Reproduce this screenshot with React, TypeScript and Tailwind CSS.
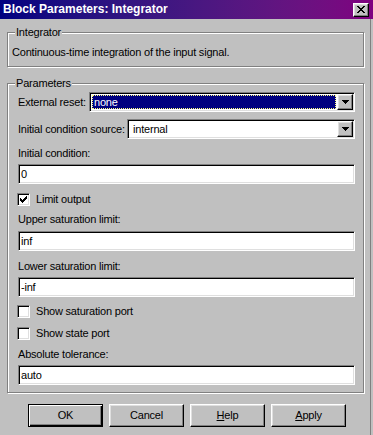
import React from 'react';

const sunken =
  'border border-t-[#808080] border-l-[#808080] border-r-white border-b-white shadow-[inset_1px_1px_0_#000,inset_-1px_-1px_0_#dfdfdf]';
const raised =
  'border border-t-white border-l-white border-r-black border-b-black shadow-[inset_-1px_-1px_0_#808080,inset_1px_1px_0_#dfdfdf]';

function Arrow() {
  return (
    <svg width="7" height="4" viewBox="0 0 7 4" shapeRendering="crispEdges">
      <path d="M0 0h7v1h-7z M1 1h5v1h-5z M2 2h3v1h-3z M3 3h1v1h-1z" fill="#000" />
    </svg>
  );
}

function Combo({ value, selected }: { value: string; selected?: boolean }) {
  return (
    <div className={`flex h-[20px] flex-1 bg-white p-[1px] ${sunken}`}>
      <div className="flex flex-1 items-center">
        {selected ? (
          <div className="m-[1px] flex h-[14px] flex-1 items-center border border-dotted border-[#ffff7f] bg-[#000080] pl-[1px] text-white">
            {value}
          </div>
        ) : (
          <span className="pl-[4px]">{value}</span>
        )}
      </div>
      <div className={`flex w-[16px] items-center justify-center bg-[#c0c0c0] ${raised}`}>
        <Arrow />
      </div>
    </div>
  );
}

function Field({ value, className = '' }: { value: string; className?: string }) {
  return (
    <div className={`flex h-[20px] items-center bg-white pl-[2px] ${sunken} ${className}`}>{value}</div>
  );
}

function Check({ checked, label, className = '' }: { checked?: boolean; label: string; className?: string }) {
  return (
    <div className={`flex h-[13px] items-center gap-[6px] ${className}`}>
      <div className={`flex h-[13px] w-[13px] items-center justify-center bg-white ${sunken}`}>
        {checked && (
          <svg width="7" height="7" viewBox="0 0 7 7" shapeRendering="crispEdges">
            <path
              d="M6 0h1v1h-1z M5 1h2v1h-2z M0 2h1v1h-1z M4 2h3v1h-3z M0 3h2v1h-2z M3 3h3v1h-3z M0 4h5v1h-5z M1 5h3v1h-3z M2 6h1v1h-1z"
              fill="#000"
            />
          </svg>
        )}
      </div>
      <span>{label}</span>
    </div>
  );
}

function Label({ text, className = '' }: { text: string; className?: string }) {
  return <div className={`h-[13px] leading-[13px] ${className}`}>{text}</div>;
}

function Button({ children, isDefault }: { children: React.ReactNode; isDefault?: boolean }) {
  return (
    <button
      className={
        isDefault
          ? 'flex h-[23px] w-[75px] items-center justify-center border border-black bg-[#c0c0c0] shadow-[inset_1px_1px_0_#fff,inset_-1px_-1px_0_#000,inset_-2px_-2px_0_#808080]'
          : `flex h-[23px] w-[75px] items-center justify-center bg-[#c0c0c0] ${raised}`
      }
    >
      {children}
    </button>
  );
}

export default function App() {
  return (
    <div className="flex h-[435px] w-[373px] flex-col overflow-hidden bg-[#c0c0c0] font-['Liberation_Sans',Arial,sans-serif] text-[11px] leading-[13px] tracking-[-0.2px] text-black">
      {/* Title bar */}
      <div className="flex h-[19px] shrink-0 items-center justify-between bg-gradient-to-r from-[#000080] to-[#800080] pl-[3px] pr-[4px]">
        <span className="text-[12px] font-bold tracking-normal text-white">Block Parameters: Integrator</span>
        <button className={`flex h-[14px] w-[16px] items-center justify-center bg-[#c0c0c0] ${raised}`}>
          <svg width="8" height="7" viewBox="0 0 8 7" shapeRendering="crispEdges">
            <path
              d="M0 0h2v1h-2z M6 0h2v1h-2z M1 1h2v1h-2z M5 1h2v1h-2z M2 2h4v1h-4z M3 3h2v1h-2z M2 4h4v1h-4z M1 5h2v1h-2z M5 5h2v1h-2z M0 6h2v1h-2z M6 6h2v1h-2z"
              fill="#000"
            />
          </svg>
        </button>
      </div>

      <div className="flex w-[371px] flex-1 flex-col border-r border-[#808080]">
        {/* Integrator group */}
        <div className="relative ml-[7px] mt-[13px] h-[35px] w-[357px] border border-[#808080] shadow-[1px_1px_0_#fff,inset_1px_1px_0_#fff]">
          <span className="absolute -top-[7px] left-[7px] bg-[#c0c0c0] px-[1px]">Integrator</span>
          <div className="pl-[4px] pt-[13px]">Continuous-time integration of the input signal.</div>
        </div>

        {/* Parameters group */}
        <div className="relative ml-[7px] mt-[16px] flex h-[310px] w-[357px] flex-col border border-[#808080] pl-[10px] pr-[8px] pt-[8px] shadow-[1px_1px_0_#fff,inset_1px_1px_0_#fff]">
          <span className="absolute -top-[7px] left-[7px] bg-[#c0c0c0] px-[1px]">Parameters</span>

          <div className="flex items-center">
            <span className="w-[71px] shrink-0">External reset:</span>
            <Combo value="none" selected />
          </div>
          <div className="mt-[7px] flex items-center">
            <span className="w-[109px] shrink-0">Initial condition source:</span>
            <Combo value="internal" />
          </div>

          <Label text="Initial condition:" className="mt-[8px]" />
          <Field value="0" className="mt-[4px]" />

          <Check checked label="Limit output" className="mt-[9px] -ml-[1px]" />

          <Label text="Upper saturation limit:" className="mt-[7px]" />
          <Field value="inf" className="mt-[5px]" />

          <Label text="Lower saturation limit:" className="mt-[9px]" />
          <Field value="-inf" className="mt-[4px]" />

          <Check label="Show saturation port" className="mt-[8px] -ml-[1px]" />
          <Check label="Show state port" className="mt-[9px] -ml-[1px]" />

          <Label text="Absolute tolerance:" className="mt-[8px]" />
          <Field value="auto" className="mt-[4px]" />
        </div>

        {/* Buttons */}
        <div className="mt-[11px] flex gap-[6px] pl-[28px]">
          <Button isDefault>OK</Button>
          <Button>Cancel</Button>
          <Button>
            <span>
              <span className="underline">H</span>elp
            </span>
          </Button>
          <Button>
            <span>
              <span className="underline">A</span>pply
            </span>
          </Button>
        </div>
      </div>
    </div>
  );
}
